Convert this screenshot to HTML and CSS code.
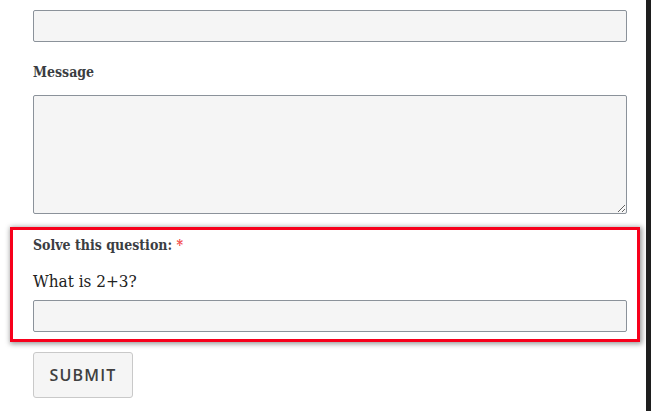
FILE: index.html
```html
<!DOCTYPE html>
<html lang="en">
<head>
<meta charset="utf-8">
<title>Contact form</title>
<link rel="stylesheet" href="styles.css">
</head>
<body>
<div class="page">
  <form class="form">
    <input class="field" type="text" aria-label="Subject">
    <label class="label label-message" for="msg">Message</label>
    <textarea id="msg" class="field area"></textarea>
    <div class="captcha">
      <label class="label" for="q">Solve this question: <span class="req">*</span></label>
      <p class="question">What is 2+3?</p>
      <input id="q" class="field" type="text">
    </div>
    <button class="submit" type="button">SUBMIT</button>
  </form>
  <div class="scrollbar"></div>
</div>
</body>
</html>
```

FILE: styles.css
```css
* { box-sizing: border-box; }
html, body { margin: 0; padding: 0; background: #fff; }
body { width: 651px; height: 411px; overflow: hidden; }

.page {
  display: flex;
  height: 411px;
}

.form {
  flex: 1;
  display: flex;
  flex-direction: column;
  padding: 10px 0 0 33px;
}

.field {
  display: block;
  width: 594px;
  height: 32px;
  margin: 0;
  background: #f5f5f5;
  border: 1px solid #8b929a;
  border-radius: 2px;
  font: 14px "DejaVu Serif", serif;
}

.area {
  height: 119px;
  resize: vertical;
}

.label {
  display: block;
  font-family: "DejaVu Serif Condensed", "DejaVu Serif", serif;
  font-stretch: condensed;
  font-weight: bold;
  font-size: 14px;
  line-height: 20px;
  color: #3b3d42;
}

.label-message {
  margin: 20px 0 13px;
}

.req { color: #f24a4a; }

.captcha {
  margin: 13px 0 0 -23px;
  width: 630px;
  border: 3px solid #f7001b;
  padding: 5px 10px 7px 20px;
  box-shadow: 1px 1px 5px 1px rgba(0, 0, 0, 0.4);
}

.question {
  margin: 13px 0 6px;
  font-family: "DejaVu Serif Condensed", "DejaVu Serif", serif;
  font-stretch: condensed;
  font-size: 17px;
  line-height: 26px;
  color: #222;
}

.submit {
  align-self: flex-start;
  margin-top: 10px;
  width: 100px;
  height: 46px;
  background: #f5f5f5;
  border: 1px solid #c9c9c9;
  border-radius: 3px;
  font: 600 16px "Open Sans", sans-serif;
  letter-spacing: 1.2px;
  color: #404040;
  padding: 0;
}

.scrollbar {
  width: 5px;
  background: #1e1e1e;
}
```
